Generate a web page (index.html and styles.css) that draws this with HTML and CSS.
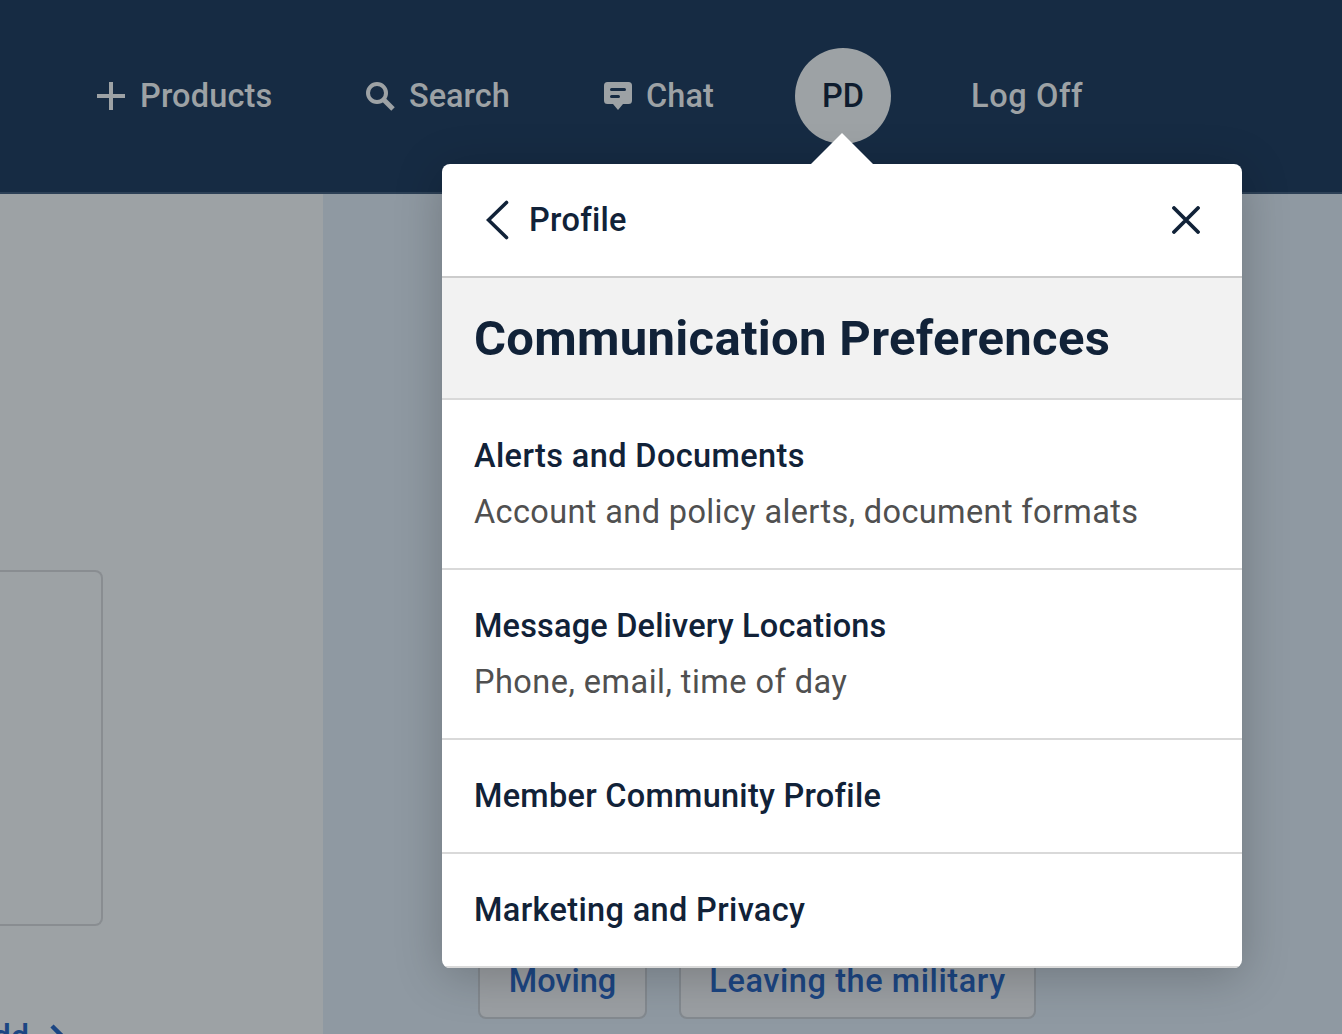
FILE: index.html
```
<!DOCTYPE html>
<html lang="en">
<head>
<meta charset="utf-8">
<title>Communication Preferences</title>
<link rel="stylesheet" href="styles.css">
</head>
<body>
<header class="header">
  <nav class="nav">
    <a class="nav-item products"><svg class="icon" width="28" height="28" viewBox="0 0 28 28"><path d="M14 0v28M0 14h28" stroke="currentColor" stroke-width="4"/></svg><span>Products</span></a>
    <a class="nav-item search"><svg class="icon" width="30" height="30" viewBox="0 0 30 30" fill="none" stroke="currentColor"><circle cx="11" cy="12" r="9" stroke-width="4"/><path d="M17.500 18.500l9.500 9.500" stroke-width="5"/></svg><span>Search</span></a>
    <a class="nav-item chat"><svg class="icon" width="28" height="28" viewBox="0 0 28 28"><path d="M3.500 0h21A3.500 3.500 0 0 1 28 3.500v15a3.500 3.500 0 0 1-3.500 3.500h-5.500l-5 6-5-6H3.500A3.500 3.500 0 0 1 0 18.500v-15A3.500 3.500 0 0 1 3.500 0z" fill="currentColor"/><path d="M7.500 7.500h13M7.500 14.500h7" stroke="#162b43" stroke-width="3" stroke-linecap="round"/></svg><span>Chat</span></a>
    <a class="avatar"><span>PD</span></a>
    <a class="nav-item logoff"><span>Log Off</span></a>
  </nav>
</header>
<main class="main">
  <section class="left">
    <div class="card"></div>
    <a class="add"><span>Add</span><svg width="16" height="26" viewBox="0 0 16 26" fill="none"><path d="M2 2l11 11L2 24" stroke="currentColor" stroke-width="4.500"/></svg></a>
  </section>
  <section class="right">
    <a class="chip moving"><span>Moving</span></a>
    <a class="chip leaving"><span>Leaving the military</span></a>
  </section>
</main>
<div class="popover">
  <svg class="arrow" width="64" height="32" viewBox="0 0 64 32"><path d="M0 32L32 0l32 32z" fill="#fff"/></svg>
  <div class="top">
    <svg width="24" height="40" viewBox="0 0 24 40" fill="none"><path d="M20.500 2.500L2.500 20l18 17.500" stroke="currentColor" stroke-width="3.600" stroke-linecap="round"/></svg>
    <span class="profile">Profile</span>
    <svg class="close" width="28" height="28" viewBox="0 0 28 28"><path d="M2 2l24 24M26 2L2 26" stroke="currentColor" stroke-width="3.800" stroke-linecap="round"/></svg>
  </div>
  <h1 class="title"><span>Communication Preferences</span></h1>
  <ul class="list">
    <li class="row"><span class="name alerts">Alerts and Documents</span><span class="note account">Account and policy alerts, document formats</span></li>
    <li class="row"><span class="name message">Message Delivery Locations</span><span class="note phone">Phone, email, time of day</span></li>
    <li class="row"><span class="name member">Member Community Profile</span></li>
    <li class="row"><span class="name marketing">Marketing and Privacy</span></li>
  </ul>
</div>
</body>
</html>
```
FILE: styles.css
```
* { box-sizing: border-box; }
body {
  margin: 0;
  width: 1342px;
  height: 1034px;
  overflow: hidden;
  position: relative;
  font: 500 32.500px/40px Roboto, "Liberation Sans", sans-serif;
  color: #112238;
  background: #8f99a2;
}
a, span { white-space: nowrap; }
svg { flex: none; display: block; }
.header {
  height: 194px;
  background: #162b43;
  border-bottom: 2px solid #2c4056;
}
.nav { display: flex; align-items: center; height: 192px; padding-left: 97px; color: #9da2a5; }
.nav-item { display: flex; align-items: center; }
.products { width: 269px; gap: 15px; letter-spacing: .15px; }
.search { width: 238px; gap: 13px; letter-spacing: 0; }
.chat { width: 191px; gap: 14px; letter-spacing: .1px; }
.avatar {
  width: 96px; height: 96px;
  border-radius: 50%;
  background: #9da2a5;
  color: #0e1c2e;
  display: flex; align-items: center; justify-content: center;
}
.logoff { margin-left: 80px; letter-spacing: .6px; }
.main { display: flex; height: 840px; }
.left { width: 323px; background: #9da2a5; padding-top: 376px; }
.card {
  width: 103px; height: 356px;
  border: 2px solid #898d91;
  border-left: 0;
  border-radius: 0 8px 8px 0;
}
.add { display: flex; align-items: center; gap: 21px; margin: 91px 0 0 -29px; color: #1c4683; }
.right { flex: 1; display: flex; align-items: flex-end; gap: 32px; padding: 0 0 15px 155px; }
.chip {
  height: 76px;
  border: 2px solid #83898f;
  border-radius: 8px;
  background: #9b9fa3;
  color: #1c4683;
  display: flex; align-items: center; justify-content: center;
}
.moving { width: 169px; }
.leaving { width: 357px; letter-spacing: .58px; }
.popover {
  position: absolute;
  left: 442px; top: 164px;
  width: 800px; height: 804px;
  background: #fff;
  border-radius: 8px;
  box-shadow: 0 8px 48px rgba(0, 0, 0, .22);
}
.arrow { position: absolute; left: 368px; top: -31px; }
.top { display: flex; align-items: center; height: 114px; padding: 0 42px 0 44px; border-bottom: 2px solid #ccc; }
.profile { margin-left: 19px; letter-spacing: .3px; }
.close { margin-left: auto; }
.title {
  margin: 0;
  height: 122px;
  padding-left: 32px;
  background: #f2f2f2;
  border-bottom: 2px solid #d9d9d9;
  font: 700 49px/121px Roboto, "Liberation Sans", sans-serif;
  letter-spacing: .3px;
}
.list { list-style: none; margin: 0; padding: 0; border-radius: 0 0 8px 8px; overflow: hidden; }
.row { padding: 36px 32px; border-bottom: 2px solid #d9d9d9; }
.name, .note { display: block; }
.note { margin-top: 16px; font-weight: 400; color: #505050; }
.alerts { letter-spacing: .38px; }
.message { letter-spacing: .18px; }
.member { letter-spacing: .27px; }
.marketing { letter-spacing: .35px; }
.account { letter-spacing: .37px; }
.phone { letter-spacing: .47px; }
```
